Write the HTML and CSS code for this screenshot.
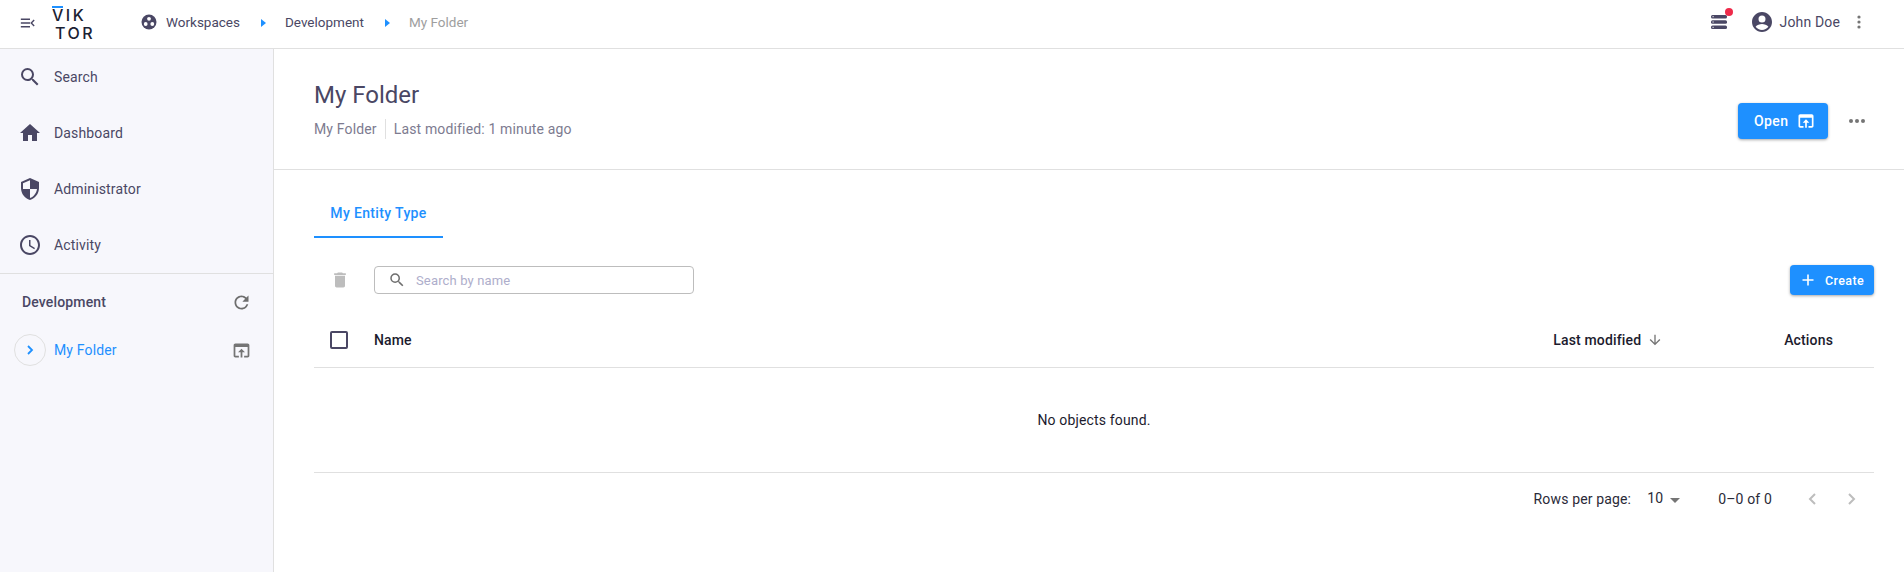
FILE: index.html
```html
<!DOCTYPE html>
<html lang="en">
<head>
<meta name="viewport" content="width=device-width, initial-scale=1">
<title>My Folder</title>
<link rel="stylesheet" href="styles.css">
</head>
<body>
	<header class="topbar">
		<svg class="menu-icon" width="15" height="10" viewBox="0 0 18 12"><path d="M1 1.500h11M1 6h11M1 10.500h11M17 2.500 13.500 6l3.500 3.500" fill="none" stroke="#4a4764" stroke-width="1.700"/></svg>
		<div class="logo"><span class="logo-top">VIK</span><span class="logo-bottom">TOR</span></div>
		<nav class="crumbs">
			<svg width="16" height="16" viewBox="0 0 16 16"><circle cx="8" cy="8" r="7.500" fill="#4a4764"/><circle cx="8" cy="4.800" r="1.900" fill="#fff"/><circle cx="4.700" cy="10" r="1.900" fill="#fff"/><circle cx="11.300" cy="10" r="1.900" fill="#fff"/></svg>
			<span class="crumb">Workspaces</span>
			<i class="crumb-arrow"></i>
			<span class="crumb">Development</span>
			<i class="crumb-arrow"></i>
			<span class="crumb crumb-current">My Folder</span>
		</nav>
		<div class="top-right">
			<div class="jobs">
				<svg width="16" height="14" viewBox="0 0 16 14"><g fill="#4a4764"><rect width="16" height="3.400" rx="1.500"/><rect y="5.300" width="16" height="3.400" rx="1.500"/><rect y="10.600" width="16" height="3.400" rx="1.500"/></g><g fill="#fff"><rect x="1.500" y="1.200" width="1.200" height="1"/><rect x="1.500" y="6.500" width="1.200" height="1"/><rect x="1.500" y="11.800" width="1.200" height="1"/></g></svg>
				<span class="jobs-dot"></span>
			</div>
			<div class="user">
				<svg width="24" height="24" viewBox="0 0 24 24"><path fill="#4a4764" d="M12 2C6.480 2 2 6.480 2 12s4.480 10 10 10 10-4.480 10-10S17.520 2 12 2zm0 3.500a3.500 3.500 0 1 1 0 7 3.500 3.500 0 0 1 0-7zM12 20c-2.600 0-4.900-1.200-6.400-3.200C6.900 14.900 9.800 14 12 14s5.100.9 6.400 2.800C16.900 18.800 14.600 20 12 20z"/></svg>
				<span>John Doe</span>
			</div>
			<svg width="4" height="14" viewBox="0 0 4 14"><g fill="#757575"><circle cx="2" cy="2" r="1.600"/><circle cx="2" cy="7" r="1.600"/><circle cx="2" cy="12" r="1.600"/></g></svg>
		</div>
	</header>

	<div class="layout">
		<aside class="sidebar">
			<ul class="side-menu">
				<li>
					<svg width="24" height="24" viewBox="0 0 24 24"><path fill="#4a4764" d="M15.500 14h-.79l-.28-.27A6.470 6.470 0 0 0 16 9.500 6.500 6.500 0 1 0 9.500 16c1.610 0 3.090-.59 4.230-1.570l.27.28v.79l5 4.990L20.490 19l-4.990-5zm-6 0C7.010 14 5 11.990 5 9.500S7.010 5 9.500 5 14 7.010 14 9.500 11.990 14 9.500 14z"/></svg>
					Search
				</li>
				<li>
					<svg width="24" height="24" viewBox="0 0 24 24"><path fill="#4a4764" d="M10 20v-6h4v6h5v-8h3L12 3 2 12h3v8z"/></svg>
					Dashboard
				</li>
				<li>
					<svg width="24" height="24" viewBox="0 0 24 24"><path fill="#4a4764" d="M12 1 3 5v6c0 5.550 3.840 10.740 9 12 5.160-1.260 9-6.450 9-12V5l-9-4zm0 10.990h7c-.53 4.120-3.280 7.790-7 8.940V12H5V6.300l7-3.110v8.800z"/></svg>
					Administrator
				</li>
				<li>
					<svg width="24" height="24" viewBox="0 0 24 24"><path fill="#4a4764" d="M11.990 2C6.470 2 2 6.480 2 12s4.470 10 9.990 10C17.520 22 22 17.520 22 12S17.520 2 11.990 2zM12 20c-4.420 0-8-3.580-8-8s3.580-8 8-8 8 3.580 8 8-3.580 8-8 8zm.5-13H11v6l5.250 3.150.75-1.230-4.500-2.670z"/></svg>
					Activity
				</li>
			</ul>
			<div class="tree">
				<div class="tree-head">
					<span>Development</span>
					<svg width="21" height="21" viewBox="0 0 24 24"><path fill="#6e6e6e" d="M17.650 6.350A7.958 7.958 0 0 0 12 4c-4.420 0-7.990 3.580-7.990 8s3.570 8 7.990 8c3.730 0 6.840-2.550 7.730-6h-2.080A5.990 5.990 0 0 1 12 18c-3.310 0-6-2.690-6-6s2.690-6 6-6c1.660 0 3.140.69 4.220 1.780L13 11h7V4l-2.350 2.350z"/></svg>
				</div>
				<div class="tree-row">
					<span class="tree-toggle"><svg width="8" height="10" viewBox="0 0 8 10"><path d="M2 1l4 4-4 4" fill="none" stroke="#1e90ff" stroke-width="1.800"/></svg></span>
					<span class="tree-label">My Folder</span>
					<svg class="tree-open" width="21" height="21" viewBox="0 0 24 24"><path fill="#757575" d="M19 4H5c-1.110 0-2 .9-2 2v12c0 1.100.89 2 2 2h4v-2H5V8h14v10h-4v2h4c1.100 0 2-.9 2-2V6c0-1.100-.89-2-2-2zm-7 6-4 4h3v6h2v-6h3l-4-4z"/></svg>
				</div>
			</div>
		</aside>

		<main class="content">
			<section class="page-head">
				<div>
					<h1>My Folder</h1>
					<div class="meta"><span>My Folder</span><span>Last modified: 1 minute ago</span></div>
				</div>
				<div class="head-actions">
					<button class="btn btn-open">Open
						<svg width="20" height="20" viewBox="0 0 24 24"><path fill="#fff" d="M19 4H5c-1.110 0-2 .9-2 2v12c0 1.100.89 2 2 2h4v-2H5V8h14v10h-4v2h4c1.100 0 2-.9 2-2V6c0-1.100-.89-2-2-2zm-7 6-4 4h3v6h2v-6h3l-4-4z"/></svg>
					</button>
					<svg width="16" height="4" viewBox="0 0 16 4"><g fill="#757575"><circle cx="2" cy="2" r="2"/><circle cx="8" cy="2" r="2"/><circle cx="14" cy="2" r="2"/></g></svg>
				</div>
			</section>

			<section class="panel">
				<div class="tabs"><span class="tab">My Entity Type</span></div>
				<div class="toolbar">
					<svg class="trash" width="20" height="20" viewBox="0 0 24 24"><path fill="#bdbdbd" d="M6 19c0 1.100.9 2 2 2h8c1.100 0 2-.9 2-2V7H6v12zM19 4h-3.500l-1-1h-5l-1 1H5v2h14V4z"/></svg>
					<div class="search-box">
						<svg width="18" height="18" viewBox="0 0 24 24"><path fill="#6e6e6e" d="M15.500 14h-.79l-.28-.27A6.470 6.470 0 0 0 16 9.500 6.500 6.500 0 1 0 9.500 16c1.610 0 3.090-.59 4.230-1.570l.27.28v.79l5 4.990L20.490 19l-4.990-5zm-6 0C7.010 14 5 11.990 5 9.500S7.010 5 9.500 5 14 7.010 14 9.500 11.990 14 9.500 14z"/></svg>
						<span>Search by name</span>
					</div>
					<button class="btn btn-create">
						<svg width="14" height="14" viewBox="0 0 14 14"><path d="M7 1.500v11M1.500 7h11" stroke="#fff" stroke-width="1.600" fill="none"/></svg>
						Create
					</button>
				</div>
				<div class="table-head">
					<span class="checkbox"></span>
					<span class="col-name">Name</span>
					<span class="col-modified">Last modified
						<svg width="16" height="16" viewBox="0 0 24 24"><path fill="#757575" d="m20 12-1.410-1.410L13 16.170V4h-2v12.170l-5.580-5.590L4 12l8 8 8-8z"/></svg>
					</span>
					<span class="col-actions">Actions</span>
				</div>
				<div class="empty">No objects found.</div>
				<div class="pager">
					<span>Rows per page:</span>
					<span class="pager-size"><span class="pager-num">10</span><i class="caret"></i></span>
					<span class="pager-range">0–0 of 0</span>
					<svg width="10" height="14" viewBox="0 0 10 14"><path d="M8 2 3 7l5 5" fill="none" stroke="#bdbdbd" stroke-width="2"/></svg>
					<svg class="pager-next" width="10" height="14" viewBox="0 0 10 14"><path d="M2 2l5 5-5 5" fill="none" stroke="#bdbdbd" stroke-width="2"/></svg>
				</div>
			</section>
		</main>
	</div>
</body>
</html>
```

FILE: styles.css
```css
:root {
	--ink:#4a4764;
	--blue:#1e90ff;
	--line:#e0e0e0;
	--side:#f7f7fc;
}

* {
	box-sizing:border-box;
	font-family:"Roboto", "Liberation Sans", sans-serif;
}

html, body {
	margin:0;
	height:100%;
	background-color:#fff;
	overflow:hidden;
	letter-spacing:.15px;
}

/* top bar */
.topbar{
	display:flex;
	align-items:center;
	height:49px;
	border-bottom:1px solid var(--line);
	padding:0 0 4px 20px;
	color:var(--ink);
	font-size:14px;
}

.menu-icon{
	margin:2px 17px 0 0;
}

.logo{
	display:flex;
	flex-direction:column;
	width:38px;
	margin-top:3px;
	font-family:"Inter", sans-serif;
	font-size:16px;
	font-weight:500;
	line-height:18px;
	letter-spacing:2.500px;
	color:#1b2233;
	white-space:nowrap;
}

.logo span{
	font-family:inherit;
}

.logo-top{
	position:relative;
}

.logo-top::before{
	content:"";
	position:absolute;
	left:0;
	top:.5px;
	width:11px;
	height:2px;
	background-color:var(--blue);
}

.logo-bottom{
	margin-left:3px;
}

.crumbs{
	display:flex;
	align-items:center;
	margin-left:51px;
}

.crumb{
	margin-left:9px;
	letter-spacing:0;
	font-size:13.500px;
}

.crumb-arrow{
	width:0;
	height:0;
	margin:1px 19px 0 21px;
	border-left:5px solid var(--blue);
	border-top:4px solid transparent;
	border-bottom:4px solid transparent;
}

.crumb-arrow + .crumb{
	margin-left:0;
}

.crumb-current{
	color:#9e9e9e;
}

.top-right{
	display:flex;
	align-items:center;
	margin-left:auto;
	padding-right:43px;
}

.jobs{
	position:relative;
	display:flex;
	margin-right:23px;
}

.jobs-dot{
	position:absolute;
	right:-6px;
	top:-7px;
	width:8px;
	height:8px;
	border-radius:50%;
	background-color:#ee2a4a;
}

.user{
	display:flex;
	align-items:center;
	gap:6px;
	margin-right:17px;
}

/* sidebar */
.layout{
	display:flex;
	height:calc(100vh - 49px);
}

.sidebar{
	width:274px;
	flex-shrink:0;
	background-color:var(--side);
	border-right:1px solid var(--line);
	color:var(--ink);
	font-size:14px;
}

.side-menu{
	list-style:none;
	margin:0;
	padding:0;
	border-bottom:1px solid var(--line);
}

.side-menu li{
	display:flex;
	align-items:center;
	gap:12px;
	height:56px;
	padding-left:18px;
}

.tree-head{
	display:flex;
	align-items:center;
	justify-content:space-between;
	padding:0 21px 0 22px;
	font-weight:500;
	height:56px;
}

.tree-row{
	display:flex;
	align-items:center;
	padding:0 21px 0 14px;
	margin-top:4px;
}

.tree-toggle{
	display:flex;
	align-items:center;
	justify-content:center;
	width:32px;
	height:32px;
	border:1px solid var(--line);
	border-radius:50%;
}

.tree-label{
	margin-left:8px;
	color:var(--blue);
}

.tree-open{
	margin-left:auto;
}

/* page */
.content{
	flex:1;
	min-width:0;
}

.page-head{
	display:flex;
	align-items:center;
	justify-content:space-between;
	height:121px;
	padding:2px 39px 0 40px;
	border-bottom:1px solid var(--line);
}

h1{
	margin:0 0 10px;
	font-size:24px;
	font-weight:400;
	line-height:28px;
	letter-spacing:0;
	color:var(--ink);
}

.meta{
	display:flex;
	font-size:14px;
	line-height:20px;
	color:#7d7b90;
}

.meta span + span{
	margin-left:8px;
	padding-left:8px;
	border-left:1px solid var(--line);
}

.head-actions{
	display:flex;
	align-items:center;
	gap:21px;
	margin-top:22px;
}

.btn{
	display:flex;
	align-items:center;
	border:none;
	border-radius:4px;
	background-color:var(--blue);
	color:#fff;
	font-weight:500;
	box-shadow:0 1px 3px rgba(0,0,0,.35);
}

.btn-open{
	justify-content:space-between;
	width:90px;
	height:36px;
	padding:0 12px 0 16px;
	font-size:14px;
	letter-spacing:.4px;
}

.panel{
	padding:0 30px 0 40px;
}

.tabs{
	display:flex;
	height:68px;
	align-items:flex-end;
}

.tab{
	width:129px;
	height:48px;
	border-bottom:2px solid var(--blue);
	color:var(--blue);
	font-size:14px;
	font-weight:500;
	line-height:46px;
	letter-spacing:.35px;
	text-align:center;
}

.toolbar{
	display:flex;
	align-items:center;
	height:30px;
	margin-top:27px;
}

.trash{
	margin:0 24px 0 16px;
}

.search-box{
	display:flex;
	align-items:center;
	gap:10px;
	width:320px;
	height:28px;
	padding-left:13px;
	border:1px solid #bdbdbd;
	border-radius:4px;
	font-size:13px;
	color:#aeaecb;
}

.btn-create{
	gap:10px;
	width:84px;
	height:30px;
	margin-left:auto;
	padding:0 0 0 11px;
	font-size:12.500px;
	letter-spacing:.4px;
}

.table-head{
	display:flex;
	align-items:center;
	height:54px;
	margin-top:19px;
	padding-bottom:2px;
	border-bottom:1px solid var(--line);
	font-size:14px;
	font-weight:500;
	color:#1c1b2e;
}

.checkbox{
	width:18px;
	height:18px;
	margin-left:16px;
	border:2px solid var(--ink);
	border-radius:2px;
}

.col-name{
	margin-left:26px;
}

.col-modified{
	display:flex;
	align-items:center;
	gap:6px;
	margin-left:auto;
}

.col-actions{
	margin-left:121px;
	padding-right:41px;
	white-space:nowrap;
}

.empty{
	display:flex;
	align-items:center;
	justify-content:center;
	height:105px;
	border-bottom:1px solid var(--line);
	font-size:14px;
	color:#1c1b2e;
}

.pager{
	display:flex;
	align-items:center;
	justify-content:flex-end;
	height:52px;
	padding-right:17px;
	font-size:14px;
	color:#2a2a38;
}

.pager-size{
	display:flex;
	align-items:center;
	margin-left:16px;
}

.pager-num{
	margin-bottom:2px;
}

.caret{
	width:0;
	height:0;
	margin:2px 0 0 7px;
	border-top:5px solid #757575;
	border-left:5px solid transparent;
	border-right:5px solid transparent;
}

.pager-range{
	margin:0 35px 0 38px;
}

.pager-next{
	margin-left:30px;
}
```
